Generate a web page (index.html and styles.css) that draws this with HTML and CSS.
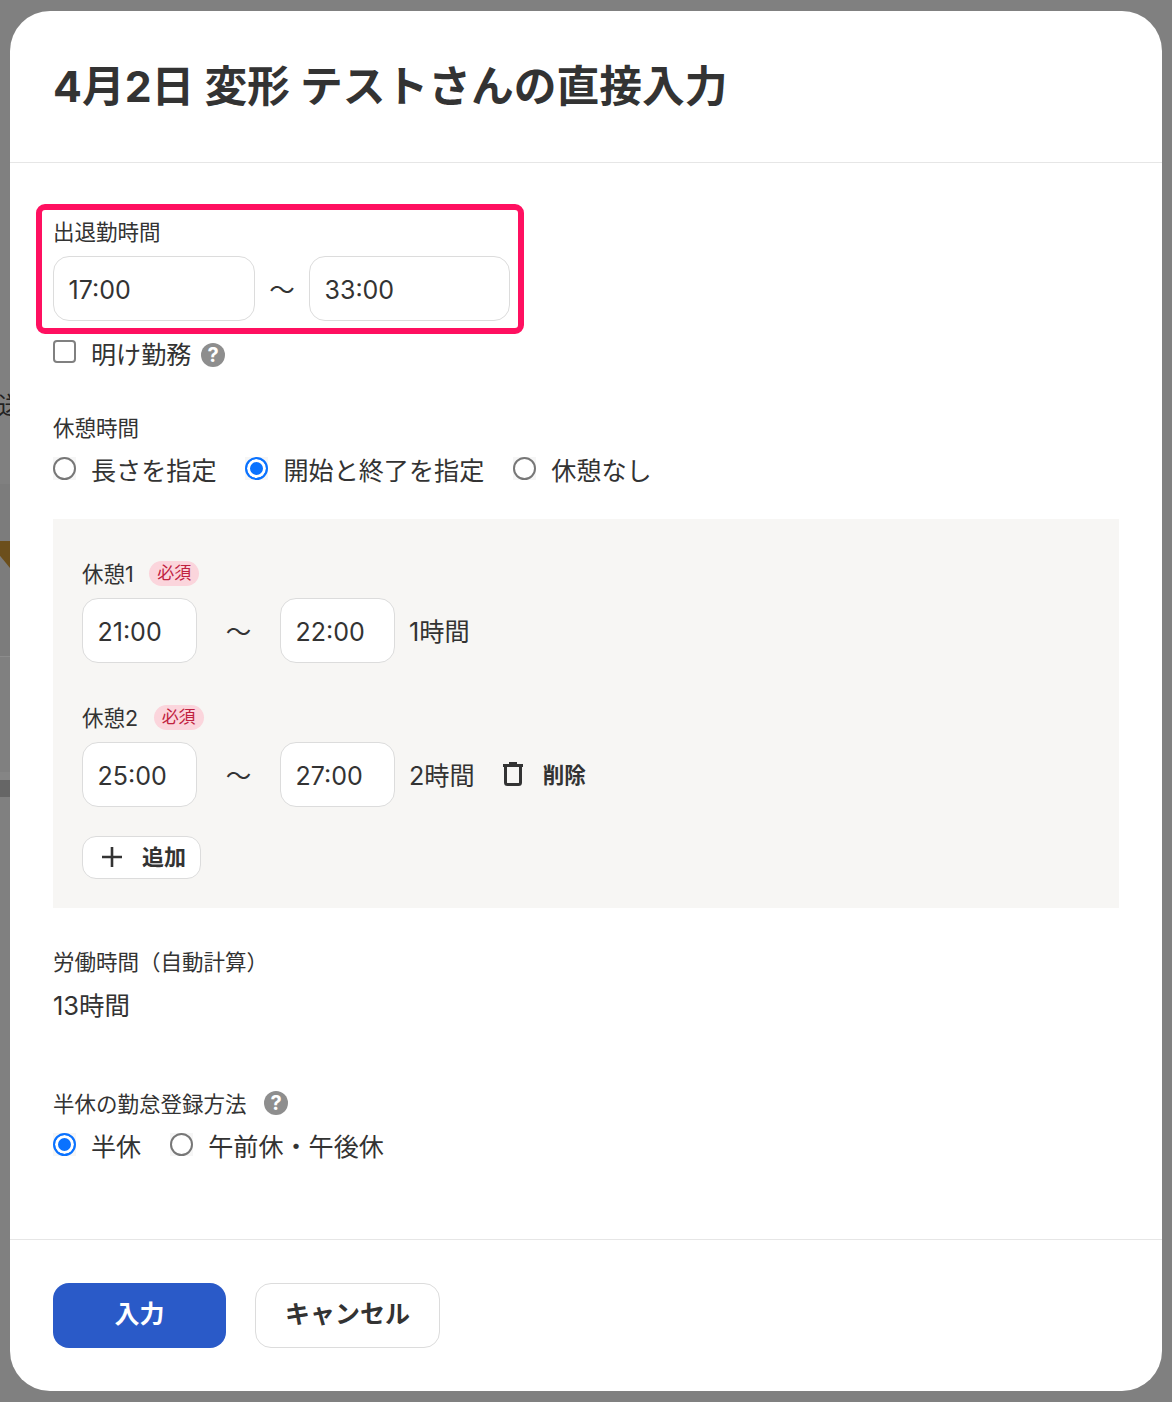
FILE: index.html
```html
<!DOCTYPE html>
<html lang="ja">
<head>
	<meta charset="utf-8"/>
	<title>直接入力</title>
	<link rel="stylesheet" href="styles.css">
</head>
<body>
	<div class="backdrop">
		<span class="bd-char">送</span>
		<span class="bd-band1"></span>
		<span class="bd-tri"></span>
		<span class="bd-line"></span>
		<span class="bd-band2"></span>
		<span class="bd-line2"></span>
	</div>
	<div class="modal">
		<div class="modal-head">
			<h1>4月2日 変形 テストさんの直接入力</h1>
		</div>
		<div class="modal-body">
			<div class="work-time">
				<div class="highlight"></div>
				<p class="label">出退勤時間</p>
				<div class="row">
					<div class="input w-202">17:00</div>
					<span class="tilde t-work">〜</span>
					<div class="input w-201">33:00</div>
				</div>
			</div>
			<div class="check-row">
				<span class="checkbox"></span>
				<span class="opt-text">明け勤務</span>
				<svg class="help" viewBox="0 0 24 24"><circle cx="12" cy="12" r="12" fill="#8e8e8e"/><text x="12" y="19" text-anchor="middle" class="help-mark">?</text></svg>
			</div>

			<p class="label rest-label">休憩時間</p>
			<div class="radio-row">
				<span class="radio"></span><span class="opt-text gap-r">長さを指定</span>
				<span class="radio on"></span><span class="opt-text gap-r">開始と終了を指定</span>
				<span class="radio"></span><span class="opt-text">休憩なし</span>
			</div>

			<div class="rest-panel">
				<div class="rest-head">
					<span class="label">休憩1</span><span class="badge">必須</span>
				</div>
				<div class="row">
					<div class="input w-115">21:00</div>
					<span class="tilde t-rest">〜</span>
					<div class="input w-115">22:00</div>
					<span class="hours">1時間</span>
				</div>
				<div class="rest-head second">
					<span class="label">休憩2</span><span class="badge">必須</span>
				</div>
				<div class="row">
					<div class="input w-115">25:00</div>
					<span class="tilde t-rest">〜</span>
					<div class="input w-115">27:00</div>
					<span class="hours">2時間</span>
					<svg class="trash" viewBox="0 0 20 24" fill="none" stroke="#333" stroke-width="3"><path d="M0 3.5h20M6 1.5h8"/><path d="M2.5 5v15.5q0 2 2 2h11q2 0 2-2V5"/></svg>
					<span class="del">削除</span>
				</div>
				<button class="add-btn">
					<svg class="plus" viewBox="0 0 20 20" fill="none" stroke="#333" stroke-width="2.6"><path d="M10 0v20M0 10h20"/></svg>
					追加
				</button>
			</div>

			<p class="label total-label">労働時間（自動計算）</p>
			<p class="total">13時間</p>

			<div class="half-head">
				<span class="label">半休の勤怠登録方法</span>
				<svg class="help" viewBox="0 0 24 24"><circle cx="12" cy="12" r="12" fill="#8e8e8e"/><text x="12" y="19" text-anchor="middle" class="help-mark">?</text></svg>
			</div>
			<div class="radio-row half">
				<span class="radio on"></span><span class="opt-text gap-r">半休</span>
				<span class="radio"></span><span class="opt-text">午前休・午後休</span>
			</div>
		</div>
		<div class="modal-foot">
			<button class="btn primary">入力</button>
			<button class="btn cancel">キャンセル</button>
		</div>
	</div>
</body>
</html>
```

FILE: styles.css
```css
*{
	margin:0;
	padding:0;
	box-sizing:border-box;
}
body{
	width:1172px;
	height:1402px;
	padding:11px 10px;
	background:#808080;
	color:#333;
	font-family:Inter,"Noto Sans CJK JP",sans-serif;
	overflow:hidden;
	position:relative;
}
.backdrop span{
	position:absolute;
	display:block;
}
.bd-char{
	left:-2px;
	top:391px;
	font-size:24px;
	line-height:30px;
	color:#222;
}
.bd-band1{
	left:0;
	top:484px;
	width:10px;
	height:172px;
	background:#7c7c7c;
}
.bd-tri{
	left:0;
	top:541px;
	width:10px;
	height:27px;
	background:#6c4f1c;
	clip-path:polygon(0 0,100% 0,100% 100%,0 55%);
}
.bd-line{
	left:0;
	top:656px;
	width:10px;
	height:1px;
	background:#8c8c8c;
}
.bd-band2{
	left:0;
	top:780px;
	width:10px;
	height:17px;
	background:#666;
}
.bd-line2{
	left:0;
	top:772px;
	width:10px;
	height:8px;
	background:#858585;
}

.modal{
	position:relative;
	width:1152px;
	height:1380px;
	background:#fff;
	border-radius:40px;
	display:flex;
	flex-direction:column;
}
.modal-head{
	height:152px;
	padding:0 43px;
	border-bottom:1px solid #e6e6e6;
	display:flex;
	align-items:center;
}
.modal-head h1{
	font-size:42.75px;
	line-height:50px;
	font-weight:700;
	margin-top:1px;
}
.modal-body{
	flex:1;
	padding:55px 43px 0;
}
.label{
	font-size:21.5px;
	line-height:30px;
}
p.label{
	line-height:28px;
	padding-bottom:2px;
}
.row{
	display:flex;
	align-items:center;
}
.work-time{
	position:relative;
	height:104px;
}
.highlight{
	position:absolute;
	left:-17px;
	top:-14px;
	width:488px;
	height:130px;
	border:6px solid #ff1060;
	border-radius:9px;
}
.input{
	height:65px;
	padding-left:14.5px;
	background:#fff;
	border:1px solid #dcdcdc;
	border-radius:16px;
	font-size:25px;
	line-height:67px;
}
.work-time .row{
	margin-top:8px;
}
.w-202{ width:202px; }
.w-201{ width:201px; }
.w-115{ width:115px; }
.tilde{
	font-size:25.5px;
	text-align:center;
	margin-top:-2px;
}
.t-work{ width:54px; }
.t-rest{ width:83px; }

.check-row{
	display:flex;
	align-items:center;
	height:40px;
	margin-top:13px;
}
.checkbox{
	width:23px;
	height:23px;
	border:2px solid #808080;
	border-radius:4px;
	margin-top:-7px;
}
.opt-text{
	font-size:25.1px;
	line-height:40px;
	margin-left:15px;
}
.help{
	width:24px;
	height:24px;
	flex:none;
}
.help-mark{
	font-size:20px;
	font-weight:700;
	fill:#fff;
	font-family:Inter,sans-serif;
}
.check-row .help{
	margin-left:10px;
}

.rest-label{
	margin-top:39px;
}
.radio-row{
	display:flex;
	align-items:center;
	height:40px;
	margin-top:7px;
}
.radio{
	width:23px;
	height:23px;
	margin-top:-6px;
	background:#f6f6f6;
	flex:none;
	position:relative;
}
.radio::before{
	content:"";
	position:absolute;
	inset:0;
	border-radius:50%;
	border:2px solid #777;
	background:#fff;
}
.radio.on::before{
	border-color:#0a72ff;
	background:#0a72ff;
	box-shadow:inset 0 0 0 3px #fff;
}
.gap-r{
	margin-right:29px;
}
.rest-panel{
	margin-top:28px;
	height:389px;
	padding:40px 29px 0;
	background:#f7f6f4;
}
.rest-head{
	display:flex;
	align-items:center;
	height:30px;
}
.rest-head.second{
	margin-top:40px;
}
.rest-head + .row{
	margin-top:9px;
}
.badge{
	margin-left:15.5px;
	width:50px;
	height:25px;
	border-radius:13px;
	background:#fbd5dc;
	color:#c0213f;
	font-size:17px;
	line-height:24px;
	text-align:center;
	margin-top:-2px;
}
.hours{
	font-size:25.2px;
	margin-left:14px;
	margin-top:-2px;
}
.trash{
	width:20px;
	height:24px;
	margin-left:28px;
	margin-top:-2px;
}
.del{
	margin-left:20px;
	font-size:21.5px;
	font-weight:700;
	margin-top:-2px;
}
.add-btn{
	display:flex;
	align-items:center;
	margin-top:29px;
	width:119px;
	height:43px;
	padding:0 0 5px 19px;
	background:#fff;
	border:1px solid #dcdcdc;
	border-radius:14px;
	color:#333;
	font:700 22px Inter,"Noto Sans CJK JP",sans-serif;
}
.plus{
	width:20px;
	height:20px;
	margin-right:20px;
	margin-top:3px;
}
.total-label{
	margin-top:40px;
}
.total{
	font-size:25.5px;
	line-height:40px;
	margin-top:8px;
}
.half-head{
	display:flex;
	align-items:center;
	height:30px;
	margin-top:64px;
}
.half-head .label{
	margin-top:-2px;
}
.half-head .help{
	margin-left:17px;
	margin-top:-5px;
}
.radio-row.half{
	margin-top:7px;
}
.modal-foot{
	height:152px;
	padding:43px 43px 0;
	border-top:1px solid #e6e6e6;
	display:flex;
	gap:29px;
}
.btn{
	height:65px;
	padding-bottom:7px;
	border-radius:16px;
	font:700 25px Inter,"Noto Sans CJK JP",sans-serif;
}
.primary{
	width:173px;
	background:#2a5ac8;
	border:0;
	color:#fff;
}
.cancel{
	width:185px;
	background:#fff;
	border:1px solid #dcdcdc;
	color:#333;
}
```
